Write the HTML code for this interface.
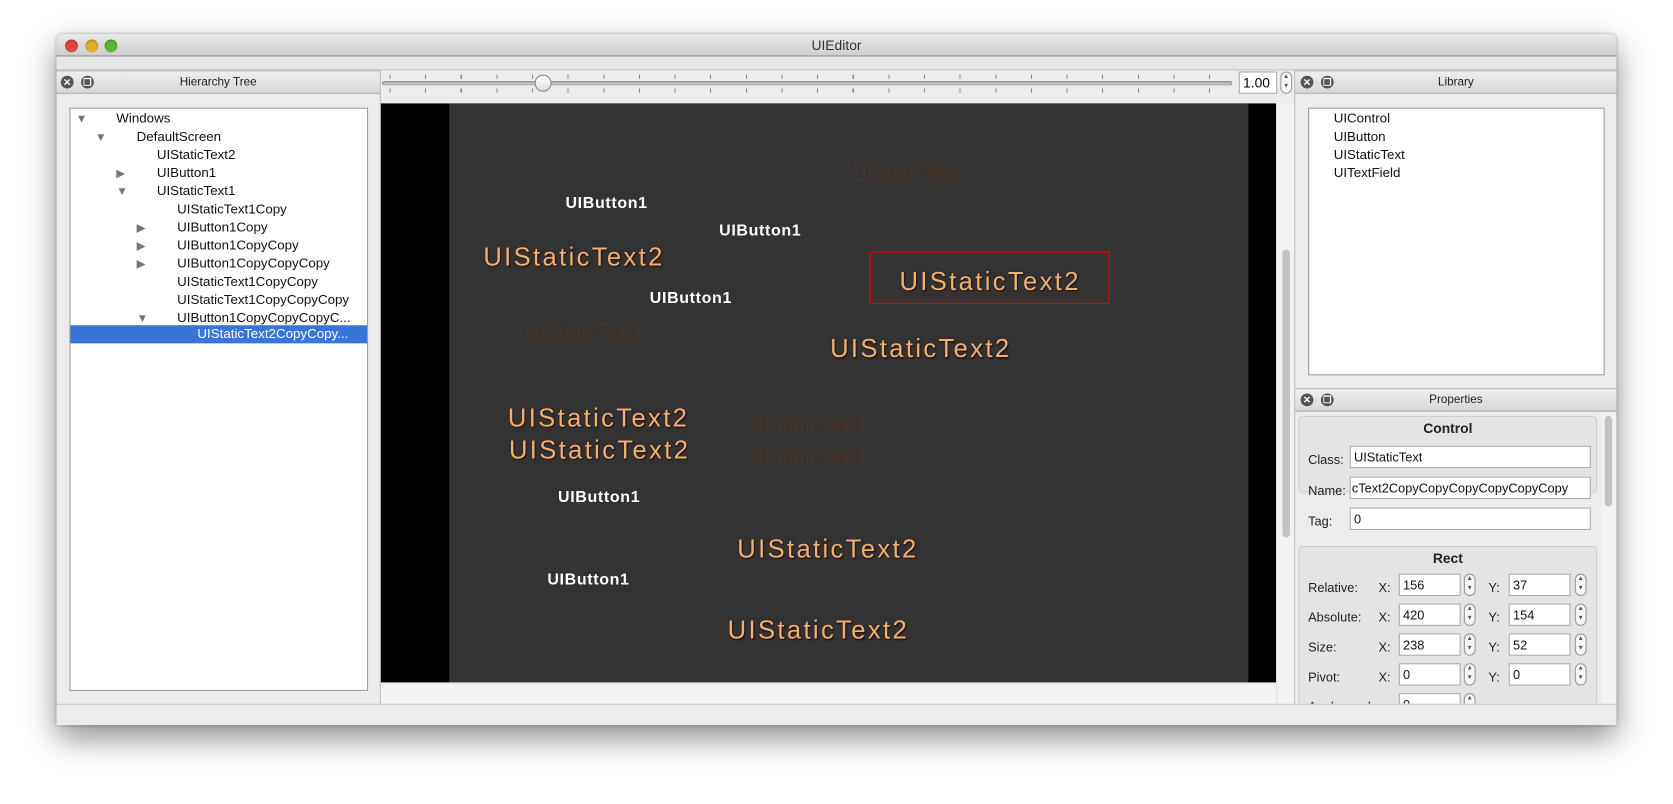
<!DOCTYPE html>
<html><head><meta charset="utf-8"><style>
*{box-sizing:border-box;margin:0;padding:0}
html,body{width:1673px;height:804px;overflow:hidden;background:#fff;font-family:"Liberation Sans",sans-serif}
#s{position:absolute;left:0;top:0;width:1568px;height:754px;transform:scale(1.06696,1.0663);transform-origin:0 0}
.a{position:absolute}
.win{left:53px;top:32px;width:1462px;height:648px;background:#ececec;border-radius:5px 5px 0 0;box-shadow:0 12px 30px rgba(0,0,0,.45),0 0 3px rgba(0,0,0,.3);overflow:hidden}
.tb{left:0;top:0;width:1462px;height:21px;background:linear-gradient(#e9e9e9,#cfcfcf);border-bottom:1px solid #8e8e8e;font-size:13px;color:#333;text-align:center;line-height:21px}
.dot{width:12px;height:12px;border-radius:50%;top:5px;box-shadow:inset 0 1px 2px rgba(0,0,0,.3)}
.hdr{height:22px;background:linear-gradient(#eeeeee,#d8d8d8);border-bottom:1px solid #aaa;border-top:1px solid #bbb;font-size:11px;color:#222;text-align:center;line-height:21px}
.ic{width:12px;height:12px;border-radius:50%;background:#555;top:4px;color:#fff;font-size:9px;line-height:12px;text-align:center;font-weight:bold}
.box{background:#fff;border:1px solid #9a9a9a}
.tr{font-size:12.5px;color:#111;height:17px;line-height:17px;white-space:nowrap}
.arr{font-size:11px;color:#777}
.bt{font-weight:bold;color:#fff;font-size:15px;letter-spacing:.6px}
.st{color:#e8b470;font-size:24px;letter-spacing:2.2px;text-shadow:0 0 2px #3a1a20,1px 1px 1px #2a0a14}
.fd{color:#4a3322;font-size:24px;transform:scaleX(.72);transform-origin:0 0;letter-spacing:1px;white-space:nowrap}
.lb{font-size:12px;color:#222}
.fl{background:#fff;border:1px solid #aaa;font-size:12px;height:21px;line-height:21px;padding-left:3px;color:#111;overflow:hidden;white-space:nowrap}
.sp{width:11px;height:21px;border:1px solid #999;border-radius:6px;background:#f6f6f6;font-size:6px;line-height:9px;text-align:center;color:#555}
.ticks{height:4px;background:repeating-linear-gradient(90deg,#888 0 1px,transparent 1px 33.4px)}
</style></head><body><div id="s">
<div class="a win">
 <div class="a tb">UIEditor</div>
 <div class="a dot" style="left:8px;background:#e2463e"></div>
 <div class="a dot" style="left:27px;background:#e3ad2a"></div>
 <div class="a dot" style="left:45px;background:#5bb43a"></div>
 <div class="a" style="left:0;top:22px;width:1462px;height:12px;background:#e6e6e6;border-bottom:1px solid #c4c4c4"></div>

 <div class="a hdr" style="left:0;top:34px;width:303px">Hierarchy Tree</div>
 <div class="a ic" style="left:4px;top:39px">✕</div>
 <div class="a ic" style="left:23px;top:39px">❐</div>
 <div class="a box" style="left:12px;top:69px;width:280px;height:547px">
  <div class="a tr" style="left:5px;top:1px"><span class="arr">▼</span></div><div class="a tr" style="left:43px;top:1px">Windows</div>
  <div class="a tr" style="left:23px;top:18px"><span class="arr">▼</span></div><div class="a tr" style="left:62px;top:18px">DefaultScreen</div>
  <div class="a tr" style="left:81px;top:35px">UIStaticText2</div>
  <div class="a tr" style="left:43px;top:52px"><span class="arr">▶</span></div><div class="a tr" style="left:81px;top:52px">UIButton1</div>
  <div class="a tr" style="left:43px;top:69px"><span class="arr">▼</span></div><div class="a tr" style="left:81px;top:69px">UIStaticText1</div>
  <div class="a tr" style="left:100px;top:86px">UIStaticText1Copy</div>
  <div class="a tr" style="left:62px;top:103px"><span class="arr">▶</span></div><div class="a tr" style="left:100px;top:103px">UIButton1Copy</div>
  <div class="a tr" style="left:62px;top:120px"><span class="arr">▶</span></div><div class="a tr" style="left:100px;top:120px">UIButton1CopyCopy</div>
  <div class="a tr" style="left:62px;top:137px"><span class="arr">▶</span></div><div class="a tr" style="left:100px;top:137px">UIButton1CopyCopyCopy</div>
  <div class="a tr" style="left:100px;top:154px">UIStaticText1CopyCopy</div>
  <div class="a tr" style="left:100px;top:171px">UIStaticText1CopyCopyCopy</div>
  <div class="a tr" style="left:62px;top:188px"><span class="arr">▼</span></div><div class="a tr" style="left:100px;top:188px">UIButton1CopyCopyCopyC...</div>
  <div class="a tr" style="left:0;top:203px;width:278px;background:#3875d7;color:#fff;padding-left:119px">UIStaticText2CopyCopy...</div>
 </div>
 <div class="a" style="left:303px;top:34px;width:1px;height:594px;background:#bbb"></div>

 <div class="a" style="left:304px;top:34px;width:857px;height:31px;background:#ececec"></div>
 <div class="a ticks" style="left:312px;top:38px;width:795px"></div>
 <div class="a ticks" style="left:312px;top:51px;width:795px"></div>
 <div class="a" style="left:305px;top:44px;width:797px;height:4px;border-radius:2px;background:linear-gradient(#999,#ddd);border:1px solid #999"></div>
 <div class="a" style="left:448px;top:38px;width:16px;height:16px;border-radius:50%;background:linear-gradient(#fff,#ddd);border:1px solid #888"></div>
 <div class="a" style="left:1108px;top:35px;width:36px;height:21px;background:#fff;border:1px solid #aaa;font-size:13px;line-height:19px;padding-left:3px">1.00</div>
 <div class="a sp" style="left:1147px;top:35px">▲<br>▼</div>
 <div class="a" style="left:304px;top:65px;width:839px;height:543px;background:#000"></div>
 <div class="a" style="left:368px;top:65px;width:749px;height:543px;background:#333;overflow:hidden">
  <div class="a fd" style="left:379px;top:52px">UIStaticText1</div>
  <div class="a bt" style="left:109px;top:85px">UIButton1</div>
  <div class="a bt" style="left:253px;top:111px">UIButton1</div>
  <div class="a st" style="left:32px;top:131px">UIStaticText2</div>
  <div class="a" style="left:394px;top:139px;width:225px;height:49px;border:1px solid #e00"></div>
  <div class="a st" style="left:422px;top:154px">UIStaticText2</div>
  <div class="a bt" style="left:188px;top:174px">UIButton1</div>
  <div class="a fd" style="left:72px;top:202px">UIStaticText1</div>
  <div class="a st" style="left:357px;top:217px">UIStaticText2</div>
  <div class="a st" style="left:55px;top:282px">UIStaticText2</div>
  <div class="a fd" style="left:282px;top:288px">UIStaticText1</div>
  <div class="a st" style="left:56px;top:312px">UIStaticText2</div>
  <div class="a fd" style="left:282px;top:318px">UIStaticText1</div>
  <div class="a bt" style="left:102px;top:361px">UIButton1</div>
  <div class="a st" style="left:270px;top:405px">UIStaticText2</div>
  <div class="a bt" style="left:92px;top:438px">UIButton1</div>
  <div class="a st" style="left:261px;top:481px">UIStaticText2</div>
 </div>
 <div class="a" style="left:1143px;top:65px;width:17px;height:563px;background:#f2f2f2;border-left:1px solid #ddd"></div>
 <div class="a" style="left:1149px;top:202px;width:7px;height:270px;border-radius:4px;background:#c3c3c3"></div>
 <div class="a" style="left:304px;top:608px;width:839px;height:20px;background:#f4f4f4;border-top:1px solid #ddd"></div>
 <div class="a" style="left:1160px;top:34px;width:1px;height:594px;background:#bbb"></div>

 <div class="a hdr" style="left:1161px;top:34px;width:301px">Library</div>
 <div class="a ic" style="left:1166px;top:39px">✕</div>
 <div class="a ic" style="left:1185px;top:39px">❐</div>
 <div class="a box" style="left:1173px;top:69px;width:278px;height:251px">
  <div class="a tr" style="left:23px;top:1px">UIControl</div>
  <div class="a tr" style="left:23px;top:18px">UIButton</div>
  <div class="a tr" style="left:23px;top:35px">UIStaticText</div>
  <div class="a tr" style="left:23px;top:52px">UITextField</div>
 </div>
 <div class="a hdr" style="left:1161px;top:332px;width:301px">Properties</div>
 <div class="a ic" style="left:1166px;top:337px">✕</div>
 <div class="a ic" style="left:1185px;top:337px">❐</div>
 <div class="a" style="left:1161px;top:355px;width:301px;height:273px;background:#ececec;overflow:hidden">
  <div class="a" style="left:3px;top:3px;width:280px;height:72px;border:1px solid #ccc;border-radius:4px;background:#e4e4e4"></div>
  <div class="a lb" style="left:0;top:7px;width:286px;text-align:center;font-weight:bold;font-size:13px">Control</div>
  <div class="a lb" style="left:12px;top:37px">Class:</div><div class="a fl" style="left:51px;top:31px;width:226px">UIStaticText</div>
  <div class="a lb" style="left:12px;top:66px">Name:</div><div class="a fl" style="left:51px;top:60px;width:226px;padding-left:1px">cText2CopyCopyCopyCopyCopyCopy</div>
  <div class="a lb" style="left:12px;top:95px">Tag:</div><div class="a fl" style="left:51px;top:89px;width:226px">0</div>
  <div class="a" style="left:3px;top:125px;width:280px;height:160px;border:1px solid #ccc;border-radius:4px;background:#e4e4e4"></div>
  <div class="a lb" style="left:0;top:129px;width:286px;text-align:center;font-weight:bold;font-size:13px">Rect</div>
  <div class="a lb" style="left:12px;top:157px">Relative:</div><div class="a lb" style="left:78px;top:157px">X:</div><div class="a fl" style="left:97px;top:151px;width:58px">156</div><div class="a sp" style="left:158px;top:151px">▲<br>▼</div><div class="a lb" style="left:181px;top:157px">Y:</div><div class="a fl" style="left:200px;top:151px;width:58px">37</div><div class="a sp" style="left:262px;top:151px">▲<br>▼</div>
  <div class="a lb" style="left:12px;top:185px">Absolute:</div><div class="a lb" style="left:78px;top:185px">X:</div><div class="a fl" style="left:97px;top:179px;width:58px">420</div><div class="a sp" style="left:158px;top:179px">▲<br>▼</div><div class="a lb" style="left:181px;top:185px">Y:</div><div class="a fl" style="left:200px;top:179px;width:58px">154</div><div class="a sp" style="left:262px;top:179px">▲<br>▼</div>
  <div class="a lb" style="left:12px;top:213px">Size:</div><div class="a lb" style="left:78px;top:213px">X:</div><div class="a fl" style="left:97px;top:207px;width:58px">238</div><div class="a sp" style="left:158px;top:207px">▲<br>▼</div><div class="a lb" style="left:181px;top:213px">Y:</div><div class="a fl" style="left:200px;top:207px;width:58px">52</div><div class="a sp" style="left:262px;top:207px">▲<br>▼</div>
  <div class="a lb" style="left:12px;top:241px">Pivot:</div><div class="a lb" style="left:78px;top:241px">X:</div><div class="a fl" style="left:97px;top:235px;width:58px">0</div><div class="a sp" style="left:158px;top:235px">▲<br>▼</div><div class="a lb" style="left:181px;top:241px">Y:</div><div class="a fl" style="left:200px;top:235px;width:58px">0</div><div class="a sp" style="left:262px;top:235px">▲<br>▼</div>
  <div class="a lb" style="left:12px;top:269px">Angle:</div><div class="a lb" style="left:64px;top:269px">deg:</div><div class="a fl" style="left:97px;top:263px;width:58px">0</div><div class="a sp" style="left:158px;top:263px">▲<br>▼</div>
  <div class="a" style="left:287px;top:0;width:14px;height:273px;background:#f2f2f2"></div>
  <div class="a" style="left:290px;top:3px;width:7px;height:85px;border-radius:4px;background:#c3c3c3"></div>
 </div>
 <div class="a" style="left:0;top:628px;width:1462px;height:20px;background:#ececec;border-top:1px solid #ccc"></div>
</div>
</div></body></html>
